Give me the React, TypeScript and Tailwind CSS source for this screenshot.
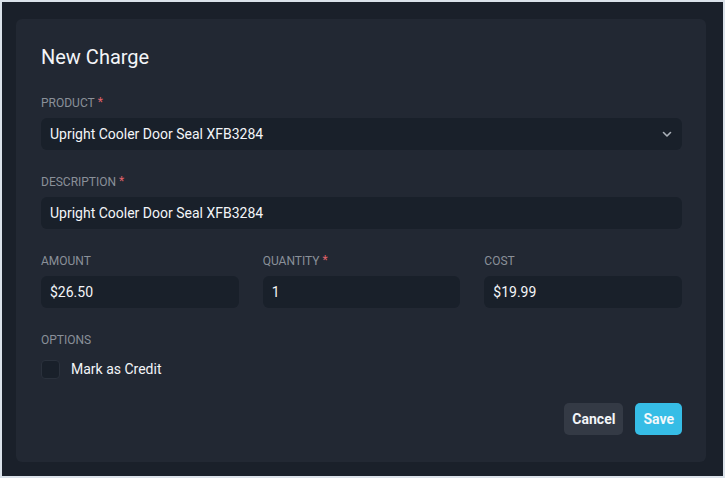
import React from "react";

const Label = ({ children, req }: { children: React.ReactNode; req?: boolean }) => (
  <div className="text-[12px] leading-[16px] uppercase text-[#8a9099] flex items-start">
    <span>{children}</span>
    {req && <span className="text-[#e0626a] ml-[3px] text-[12px] leading-[14px]">*</span>}
  </div>
);

const Field = ({ children, className = "" }: { children: React.ReactNode; className?: string }) => (
  <div className={"h-[32px] rounded-[6px] bg-[#19202a] flex items-center px-[9px] text-[14px] font-normal text-[#f3f5f8] " + className}>
    {children}
  </div>
);

export default function App() {
  return (
    <div className="w-[725px] h-[478px] bg-[#dbe2ea] pt-[2px] pl-[2px] pr-[2px] pb-[2px]" style={{ fontFamily: "Roboto, 'Liberation Sans', sans-serif" }}>
      <div className="w-[721px] h-[474px] bg-[#1a202a] pt-[17px] pl-[14px]">
        <div className="w-[690px] h-[443px] bg-[#222833] rounded-[6px] pl-[25px] pr-[24px] pt-[25px]">
          <div className="text-[20px] leading-[26px] text-[#f3f5f8]">New Charge</div>
          <div className="mt-[25px]">
            <Label req>Product</Label>
            <Field className="mt-[7px] justify-between pr-[10px]">
              <span>Upright Cooler Door Seal XFB3284</span>
              <svg width="10" height="7" viewBox="0 0 10 7" fill="none" stroke="#aab0b8" strokeWidth="1.6" strokeLinecap="round" strokeLinejoin="round">
                <path d="M1.5 1.5 L5 5 L8.5 1.5" />
              </svg>
            </Field>
          </div>
          <div className="mt-[24px]">
            <Label req>Description</Label>
            <Field className="mt-[7px]">Upright Cooler Door Seal XFB3284</Field>
          </div>
          <div className="mt-[24px] grid grid-cols-3 gap-x-[24px]">
            <div>
              <Label>Amount</Label>
              <Field className="mt-[7px]">$26.50</Field>
            </div>
            <div>
              <Label req>Quantity</Label>
              <Field className="mt-[7px]">1</Field>
            </div>
            <div>
              <Label>Cost</Label>
              <Field className="mt-[7px]">$19.99</Field>
            </div>
          </div>
          <div className="mt-[24px]">
            <Label>Options</Label>
            <div className="mt-[12px] flex items-center gap-[11px]">
              <div className="w-[19px] h-[19px] rounded-[4px] bg-[#19202a] border border-[#2a313c]" />
              <span className="text-[14px] leading-[19px] font-normal text-[#f3f5f8]">Mark as Credit</span>
            </div>
          </div>
          <div className="mt-[24px] flex justify-end gap-[12px]">
            <button className="h-[32px] px-[8px] rounded-[5px] bg-[#343a45] text-[14px] font-bold text-[#f3f5f8]">Cancel</button>
            <button className="h-[32px] px-[8px] rounded-[5px] bg-[#36bde6] text-[14px] font-bold text-[#f3f8fb]">Save</button>
          </div>
        </div>
      </div>
    </div>
  );
}
